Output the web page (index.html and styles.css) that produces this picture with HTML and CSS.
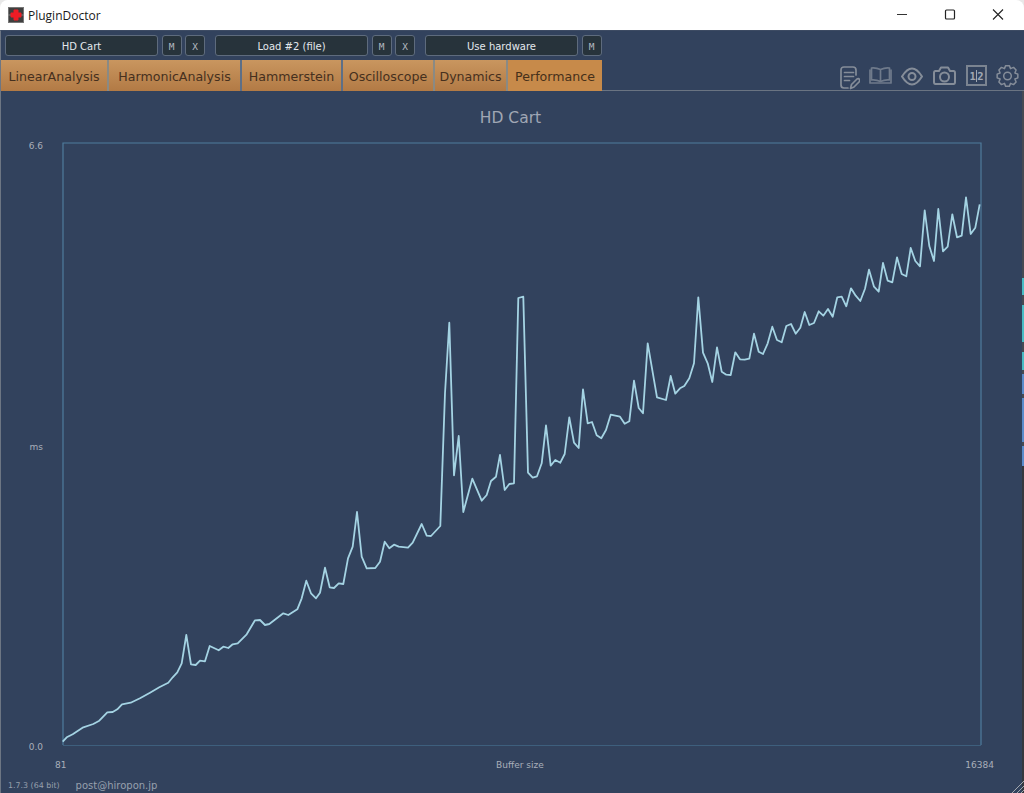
FILE: index.html
```html
<!DOCTYPE html>
<html lang="en">
<head>
<meta charset="utf-8">
<title>PluginDoctor</title>
<link rel="stylesheet" href="styles.css">
</head>
<body>
<div class="window">
  <header class="titlebar">
    <svg class="app-icon" viewBox="0 0 16 16"><rect x=".5" y=".5" width="15" height="15" fill="#3f3f3f" stroke="#777"/><path d="M0 8h16" stroke="#9a9a9a" stroke-width=".7"/><path d="M6 3h4v3h3v4h-3v3H6v-3H3V6h3z" fill="#ee1c25" stroke="#ee1c25" stroke-linejoin="round"/></svg>
    <span class="app-name">PluginDoctor</span>
    <div class="win-controls">
      <svg class="win-btn" viewBox="0 0 48 30"><path d="M19 14.500h10" stroke="#333" fill="none"/></svg>
      <svg class="win-btn" viewBox="0 0 48 30"><rect x="19.500" y="10" width="9" height="9" rx="1" stroke="#222" stroke-width="1.200" fill="none"/></svg>
      <svg class="win-btn" viewBox="0 0 48 30"><path d="M19 9.500l10 10M29 9.500l-10 10" stroke="#222" stroke-width="1.100" fill="none"/></svg>
    </div>
  </header>
  <div class="app">
    <div class="slots">
      <div class="slot"><button class="slot-name">HD Cart</button><button class="mini">M</button><button class="mini">X</button></div>
      <div class="slot"><button class="slot-name">Load #2 (file)</button><button class="mini">M</button><button class="mini">X</button></div>
      <div class="slot"><button class="slot-name">Use hardware</button><button class="mini">M</button></div>
    </div>
    <nav class="tabbar">
      <div class="tabs">
        <div class="tab tab-1">LinearAnalysis</div>
        <div class="tab tab-2">HarmonicAnalysis</div>
        <div class="tab tab-3">Hammerstein</div>
        <div class="tab tab-4">Oscilloscope</div>
        <div class="tab tab-5">Dynamics</div>
        <div class="tab tab-6 active">Performance</div>
      </div>
      <div class="tools">
        <svg class="tool tool-note" viewBox="0 0 20 30"><path d="M16 15V10Q16 7 13 7H4Q1 7 1 10V25Q1 28 4 28H8"/><path d="M4.500 12.500h9M4.500 16.500h9M4.500 20.500h5"/><path d="M10.500 28.500L11.500 24.500L17 19Q18.500 18 19.500 19.500Q20 21 19 22L14 27z"/></svg>
        <svg class="tool tool-book" viewBox="0 0 23 30"><path d="M11.500 9.500Q7 7.500 2.500 8V20Q7 19.500 11.500 21.500Q16 19.500 20.500 20V8Q16 7.500 11.500 9.500V21.500"/><path d="M1 10V23H22V10"/></svg>
        <svg class="tool tool-eye" viewBox="0 0 22 30"><path d="M1 16.500Q11 .5 21 16.500Q11 32.500 1 16.500z"/><circle cx="11" cy="16.500" r="3.500"/></svg>
        <svg class="tool tool-camera" viewBox="0 0 24 30"><path d="M3.500 11H7L9 7.500H16L18 11H21.500Q23 11 23 13V22Q23 24 21.500 24H3.500Q2 24 2 22V13Q2 11 3.500 11z"/><circle cx="12.500" cy="17" r="4.500"/></svg>
        <div class="tool-ratio"><span>1</span><i></i><span>2</span></div>
        <svg class="tool tool-gear" viewBox="0 0 23 30"><g transform="translate(11.500 16)"><path d="M10.340 1.820L7.390 3.060L8.600 6.020L6.020 8.600L3.060 7.390L1.820 10.340H-1.820L-3.060 7.390L-6.020 8.600L-8.600 6.020L-7.390 3.060L-10.340 1.820V-1.820L-7.390 -3.060L-8.600 -6.020L-6.020 -8.600L-3.060 -7.390L-1.820 -10.340H1.820L3.060 -7.390L6.020 -8.600L8.600 -6.020L7.390 -3.060L10.340 -1.820z"/><circle r="3.800"/></g></svg>
      </div>
    </nav>
    <main class="chart">
      <h1 class="chart-title">HD Cart</h1>
      <div class="plot-grid">
        <div class="y-axis"><span>6.6</span><span>ms</span><span>0.0</span></div>
        <svg class="plot" viewBox="62 142 920 604" width="920" height="604">
          <path class="frame" d="M63 745V143H981V745"/>
          <path class="baseline" d="M63 745.500H981"/>
          <polyline class="curve" points="62.700,741.700 66.700,737.300 72.700,734.300 83.300,727.300 93.300,724 99.300,720.700 107.300,712.300 112.700,712 117.300,709.300 122,704.300 130.700,702.700 140,698.300 150,692.700 159.300,687.300 168.300,682.700 172.700,677.300 177.300,672.300 181.700,663.300 186.300,635 191,664.300 195.700,665 200,660.700 205,661.300 209.700,646 218.700,650.300 223.300,646.700 228.300,648 232.700,644.300 237.700,643.300 246.700,634.300 255,620.300 260,620 265,625 269.300,624 283.300,613.300 288.300,615 297.300,609.300 301.700,598.300 306.300,580.700 311,593.300 316,598.300 320,592.700 325,567.700 329.700,587.300 334,588 338.700,583.300 343.300,584 348,558.300 352.700,546.700 357,512 361.700,556.700 366.700,568.300 375.300,568 380,561.700 384.700,541.700 389.300,548.300 394,544.700 398.700,546.700 408,547.700 412.700,542.700 421.700,524 426.700,535.700 431,536 440.300,526 445,393.300 449.300,322.700 454,475.300 458.700,436 463.300,512 472.300,478.700 481.700,500.700 486.700,495 491,481 496,476.700 500,455 504.700,490 509.300,484 514,483.300 518.300,298 523.300,296.700 528,472.700 532.700,477.700 537,476.300 541.700,463.300 546,425.300 550.700,465.700 555.300,460 560.300,462.700 564.700,454 569.300,417.300 574,442.700 578.700,448 583,389.300 587.700,423.300 592,422 596.700,435.300 601.300,438.300 606,430 610.700,414.700 620,416.700 624.700,423.700 629.300,421.300 634,380.700 638.700,408 643,413.300 647.700,343.300 657,397.300 666,400 670.700,376 675.300,393.700 680,388.300 684.300,386 689.300,378.300 694,363.300 698.300,297.300 703,352.700 707.700,363.300 712.300,382 717,347.300 721.700,371.700 726.300,374.700 730.700,375 735.300,352.300 740,359.300 744.700,359.700 749.300,358.700 754,333.700 758.700,351.700 763,354 767.700,343.300 772.300,326.700 777,340 781.700,342.300 786.300,326 791,324 795.700,333.700 800.300,327.700 804.700,312 809.300,325 814,323 818.700,311.300 823.300,315.700 828,309 832.700,316.700 837.300,297.300 841.700,296.700 846.300,306.300 851,288.300 855.700,295.700 860.300,301 865,288.700 869,269.700 874,286.700 878.700,291.700 883,263 887.700,280.700 892.300,282.300 897,257.300 901.700,274 906.300,276.300 910.700,248 915.300,261 920,266.300 924.700,210.300 929.300,246 934,261 938.300,209 943,251.300 947.700,246.700 952.300,214.300 957,237.300 961.700,235.700 966,197.300 970.700,234 975.300,227.700 979.700,204.300"/>
        </svg>
        <div class="x-axis"><span>81</span><span class="x-name">Buffer size</span><span>16384</span></div>
      </div>
      <footer class="status"><span class="version">1.7.3 (64 bit)</span><span>post@hiropon.jp</span></footer>
    </main>
  </div>
  <div class="edge">
    <i class="edge-dark edge-a"></i>
    <i class="edge-teal edge-b"></i>
    <i class="edge-dark edge-gap"></i>
    <i class="edge-teal edge-c"></i>
    <i class="edge-dark edge-gap"></i>
    <i class="edge-teal edge-d"></i>
    <i class="edge-dark edge-thin"></i>
    <i class="edge-blue edge-e"></i>
    <i class="edge-dark edge-thin"></i>
    <i class="edge-blue edge-f"></i>
    <i class="edge-dark edge-thin"></i>
    <i class="edge-blue edge-g"></i>
    <i class="edge-dark edge-rest"></i>
  </div>
  <svg class="grip" viewBox="0 0 12 12"><path d="M0 12L12 0M5 12L12 5M9 12L12 9"/></svg>
</div>
</body>
</html>
```
FILE: styles.css
```css
* { box-sizing: border-box; margin: 0; padding: 0; }
html, body { width: 1024px; height: 793px; overflow: hidden; background: #e8e8e8; }
body { font-family: "DejaVu Sans", sans-serif; }
.window { width: 1024px; height: 793px; display: flex; flex-direction: column; border-radius: 8px 8px 0 0; overflow: hidden; position: relative; }
.titlebar { height: 30px; background: #fff; display: flex; align-items: center; padding: 0 2px 0 8px; flex: none; }
.app-icon { width: 16px; height: 16px; }
.app-name { font: 12px "Open Sans", sans-serif; color: #1a1a1a; margin-left: 4px; }
.win-controls { margin-left: auto; display: flex; }
.win-btn { width: 48px; height: 30px; display: block; }
.app { flex: 1; background: #32425d; display: flex; flex-direction: column; min-height: 0; border-top: 1px solid #3d4b63; border-left: 1px solid #6d7683; }
.slots { display: flex; gap: 10px; padding: 4px 0 0 4px; height: 29px; flex: none; }
.slot { display: flex; gap: 3.500px; }
.slot-name, .mini { height: 21px; background: #27333b; border: 1px solid #5e6b7d; border-radius: 3px; color: #e4e8ec; font-family: "DejaVu Sans", sans-serif; font-size: 10px; line-height: 1; padding-top: 2px; }
.slot-name { width: 153px; }
.mini { width: 20px; font-family: "DejaVu Sans Mono", monospace; color: #b4bbc2; font-size: 9.500px; }
.tabbar { height: 31px; display: flex; flex: none; border-bottom: 1px solid #6a7482; }
.tabs { display: flex; height: 31px; flex: none; }
.tab { height: 31px; padding-top: 1px; background: linear-gradient(#c9965f, #b27a45); color: #46301e; font-size: 12.600px; display: flex; align-items: center; justify-content: center; border-right: 2px solid #8a8a84; }
.tab-1 { width: 108px; }
.tab-2 { width: 133px; border-right-color: #5d6f87; }
.tab-3 { width: 101px; border-right-color: #5d6f87; }
.tab-4 { width: 92px; }
.tab-5 { width: 73px; }
.tab-6 { width: 94px; border-right: 0; }
.tab.active { background: #c78a4a; color: #46301a; }
.tools { margin-left: auto; display: flex; align-items: flex-start; gap: 9px; padding-right: 5px; height: 30px; }
.tool { height: 30px; fill: none; stroke: #858d99; stroke-width: 1.700; stroke-linecap: round; stroke-linejoin: round; flex: none; display: block; }
.tool-note { width: 20px; }
.tool-book { width: 23px; stroke: #6f7a8b; }
.tool-eye { width: 22px; stroke-width: 2; }
.tool-camera { width: 24px; stroke-width: 2; }
.tool-gear { width: 23px; stroke-width: 1.500; }
.tool-ratio { width: 21px; height: 21px; margin: 5px 0 0 1px; border: 2px solid #7b8491; color: #a1a8b3; font: 700 10.500px "DejaVu Sans Mono", monospace; display: flex; align-items: center; justify-content: center; }
.tool-ratio i { width: 1.500px; height: 12px; background: #a1a8b3; flex: none; }
.chart { flex: 1; display: flex; flex-direction: column; min-height: 0; }
.chart-title { font-weight: 400; font-size: 15.500px; color: #a0a7b4; text-align: center; height: 51px; padding: 18px 4px 0 0; line-height: 19px; }
.plot-grid { display: grid; grid-template-columns: 61px 920px; grid-template-rows: 604px 34px; }
.y-axis { display: flex; flex-direction: column; justify-content: space-between; align-items: flex-end; padding-right: 19px; font-size: 9px; color: #a9afba; line-height: 10px; margin-top: -1px; margin-bottom: -6px; }
.plot { display: block; }
.frame { fill: none; stroke: #4f7c9d; stroke-width: 1.200; }
.baseline { fill: none; stroke: #3e5f7d; stroke-width: 1; }
.curve { fill: none; stroke: #a4d3e3; stroke-width: 1.800; stroke-linejoin: round; }
.x-axis { grid-column: 2; display: flex; justify-content: space-between; font-size: 9px; color: #a9afba; padding-top: 14px; line-height: 11px; margin-left: -7px; margin-right: -12px; }
.x-name { margin-left: 8px; }
.status { display: flex; gap: 16px; padding-left: 7px; font-size: 10px; line-height: 12px; color: #97a0ad; }
.version { font-size: 7.900px; }
.edge { position: absolute; right: 0; top: 91px; bottom: 0; width: 2px; display: flex; flex-direction: column; }
.edge i { display: block; flex: none; }
.edge-dark { background: #454a52; }
.edge-teal { background: #48bcc4; }
.edge-blue { background: #5a8ccb; }
.edge-a { height: 187px; }
.edge-b { height: 17px; }
.edge-c { height: 37px; }
.edge-d { height: 18px; }
.edge-e { height: 20px; }
.edge-f { height: 44px; }
.edge-g { height: 20px; }
.edge-gap { height: 10px; }
.edge-thin { height: 4px; }
.edge .edge-rest { flex: 1; background: #35383e; }
.grip { position: absolute; right: 0; bottom: 0; width: 12px; height: 12px; fill: none; stroke: #a3a8ae; stroke-width: 1; }
```
